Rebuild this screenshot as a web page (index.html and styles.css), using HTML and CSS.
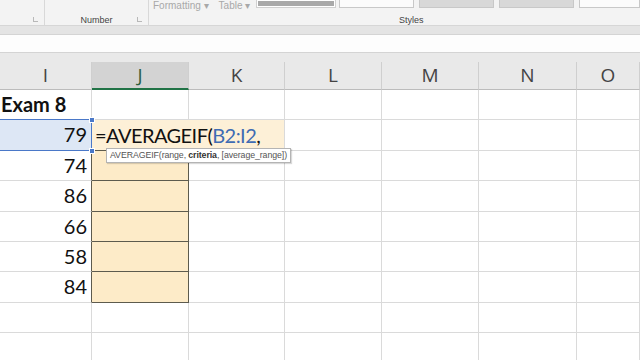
FILE: index.html
```html
<!DOCTYPE html>
<html lang="en">
<head>
    <meta charset="UTF-8">
    <title>AVERAGEIF</title>
    <link rel="stylesheet" href="styles.css">
</head>
<body>
    <!-- Ribbon (bottom edge only) -->
    <div class="ribbon">
        <div class="group g-left"><span class="launcher"></span></div>
        <div class="group g-number">
            <span class="group-label">Number</span>
            <span class="launcher"></span>
        </div>
        <div class="group g-styles">
            <div class="cut-row">
                <span class="cut-text">Formatting ▾</span>
                <span class="cut-text">Table ▾</span>
                <span class="swatch dark"></span>
                <span class="swatch"></span>
                <span class="swatch grey"></span>
                <span class="swatch grey"></span>
                <span class="swatch last"></span>
            </div>
            <span class="group-label styles-label">Styles</span>
        </div>
    </div>
    <div class="band"></div>
    <div class="formula-bar"></div>
    <div class="band band-low"></div>

    <!-- Sheet -->
    <div class="sheet">
        <div class="hd">I</div>
        <div class="hd hd-sel">J</div>
        <div class="hd">K</div>
        <div class="hd">L</div>
        <div class="hd">M</div>
        <div class="hd">N</div>
        <div class="hd">O</div>

        <div class="c title ref-top">Exam 8</div>
        <div class="c"></div><div class="c"></div><div class="c"></div><div class="c"></div><div class="c"></div><div class="c"></div>

        <div class="c num ref">79</div>
        <div class="c edit">=AVERAGEIF(<span class="range">B2:I2</span>,</div>
        <div class="c"></div><div class="c"></div><div class="c"></div><div class="c"></div>

        <div class="c num edge">74</div>
        <div class="c fill"></div>
        <div class="c"></div><div class="c"></div><div class="c"></div><div class="c"></div><div class="c"></div>

        <div class="c num edge">86</div>
        <div class="c fill"></div>
        <div class="c"></div><div class="c"></div><div class="c"></div><div class="c"></div><div class="c"></div>

        <div class="c num edge">66</div>
        <div class="c fill"></div>
        <div class="c"></div><div class="c"></div><div class="c"></div><div class="c"></div><div class="c"></div>

        <div class="c num edge">58</div>
        <div class="c fill"></div>
        <div class="c"></div><div class="c"></div><div class="c"></div><div class="c"></div><div class="c"></div>

        <div class="c num edge">84</div>
        <div class="c fill"></div>
        <div class="c"></div><div class="c"></div><div class="c"></div><div class="c"></div><div class="c"></div>

        <div class="c"></div><div class="c"></div><div class="c"></div><div class="c"></div><div class="c"></div><div class="c"></div><div class="c"></div>
        <div class="c"></div><div class="c"></div><div class="c"></div><div class="c"></div><div class="c"></div><div class="c"></div><div class="c"></div>

        <span class="handle h-top"></span>
        <span class="handle h-bottom"></span>
        <div class="tip">AVERAGEIF(range, <b>criteria</b>, [average_range])</div>
    </div>
</body>
</html>
```

FILE: styles.css
```css
html, body {
    margin: 0;
    width: 640px;
    height: 360px;
    overflow: hidden;
    background: #ffffff;
    font-family: Lato, "Liberation Sans", sans-serif;
}
.ribbon {
    height: 26px;
    box-sizing: border-box;
    background: #f3f3f3;
    border-bottom: 1px solid #d6d6d6;
    display: flex;
}
.group {
    position: relative;
    box-sizing: border-box;
    height: 25px;
    border-right: 1px solid #d8d8d8;
}
.g-left {
    width: 45px;
}
.g-number {
    width: 104px;
    text-align: center;
}
.g-styles {
    flex: 1;
    border-right: none;
}
.group-label {
    display: block;
    padding-top: 15px;
    font-family: "Liberation Sans", sans-serif;
    font-size: 9px;
    color: #444;
}
.styles-label {
    position: absolute;
    left: 250px;
    top: 0;
}
.launcher {
    position: absolute;
    right: 6px;
    top: 17px;
    width: 4px;
    height: 4px;
    border-left: 1px solid #b8b8b8;
    border-bottom: 1px solid #b8b8b8;
}
.cut-row {
    display: flex;
    align-items: flex-start;
    height: 8px;
    overflow: visible;
}
.cut-text {
    font-family: "Liberation Sans", sans-serif;
    font-size: 10px;
    line-height: 11px;
    color: #a8a8a8;
    margin-left: 4px;
    margin-right: 6px;
}
.swatch {
    box-sizing: border-box;
    width: 75px;
    height: 8px;
    margin-right: 5px;
    background: #fbfbfb;
    border: 1px solid #c8c8c8;
    border-top: none;
}
.swatch.dark {
    width: 80px;
    margin-left: 0;
    margin-right: 3px;
    background: #a9a9a9;
    border-color: #d0d0d0;
    box-shadow: inset 0 0 0 1px #fff;
}
.swatch.grey {
    background: #d8d8d8;
}
.swatch.last {
    flex: 1;
    margin-right: 0;
}
.band {
    height: 9px;
    box-sizing: border-box;
    background: #e4e4e4;
    border-bottom: 1px solid #d4d4d4;
}
.formula-bar {
    height: 18px;
    box-sizing: border-box;
    background: #fdfdfd;
    border-bottom: 1px solid #d4d4d4;
}
.band-low {
    border-bottom: none;
    background: #e9e9e9;
}
.sheet {
    position: relative;
    display: grid;
    grid-template-columns: 92px 97px 96px 97px 97px 98px 1fr;
    grid-template-rows: 28px 30px 31px 30px 31px 30px 30px 31px 30px 30px;
}
.hd {
    box-sizing: border-box;
    background: #e9e9e9;
    border-right: 1px solid #cfcfcf;
    border-bottom: 1px solid #bcbcbc;
    text-align: center;
    font-size: 19px;
    line-height: 27px;
    color: #444;
    font-family: "Open Sans", sans-serif;
}
.hd-sel {
    background: #d3d3d3;
    border-bottom: 2px solid #217346;
    color: #2d5f3f;
}
.c {
    box-sizing: border-box;
    border-right: 1px solid #dadada;
    border-bottom: 1px solid #dadada;
    font-size: 20px;
    line-height: 29px;
    color: #111;
    white-space: nowrap;
}
.title {
    font-weight: bold;
    padding-left: 1px;
}
.num {
    text-align: right;
    padding-right: 4px;
}
.ref-top {
    border-bottom-color: #4a78c8;
}
.ref {
    background: #dde7f5;
    border-bottom-color: #4a78c8;
    border-right-color: #4a78c8;
}
.edge {
    border-right-color: #5d5b4e;
}
.edit {
    grid-column: span 2;
    background: #fdf0d7;
    border-bottom-color: #5d5b4e;
    padding-left: 3px;
    line-height: 30px;
    font-size: 20px;
    letter-spacing: -0.55px;
}
.range {
    color: #3f6cb3;
}
.fill {
    background: #fdebc8;
    border-right-color: #5d5b4e;
    border-bottom-color: #5d5b4e;
}
.handle {
    position: absolute;
    left: 90px;
    width: 4px;
    height: 4px;
    background: #4a78c8;
    outline: 1px solid #ffffff;
}
.h-top {
    top: 56px;
}
.h-bottom {
    top: 87px;
}
.tip {
    position: absolute;
    left: 106px;
    top: 86px;
    height: 15px;
    box-sizing: border-box;
    padding: 0 3px;
    background: #ffffff;
    border: 1px solid #b4b4b4;
    box-shadow: 1px 1px 1px rgba(0, 0, 0, 0.15);
    font-family: "Liberation Sans", sans-serif;
    font-size: 8.8px;
    letter-spacing: -0.1px;
    line-height: 13px;
    color: #555;
    white-space: nowrap;
}
.tip b {
    color: #333;
}
```
